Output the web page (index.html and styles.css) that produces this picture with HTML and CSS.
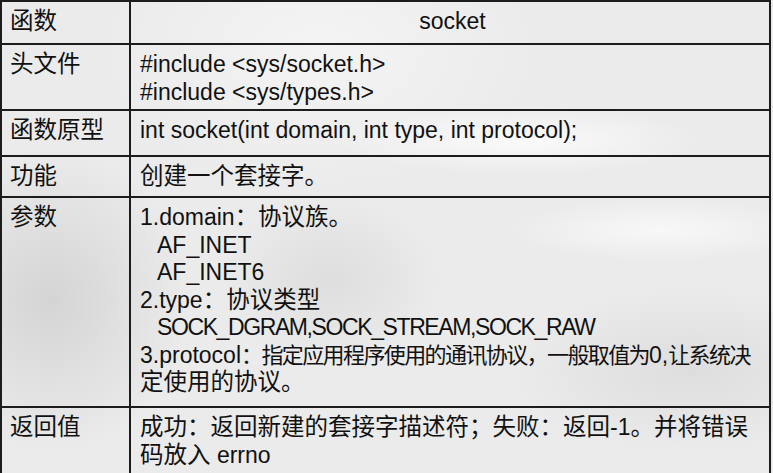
FILE: index.html
```html
<!DOCTYPE html>
<html lang="zh-CN">

<head>
  <meta charset="UTF-8" />
  <meta name="viewport" content="width=device-width, initial-scale=1.0" />
  <title>socket</title>
  <link rel="stylesheet" href="styles.css">
</head>

<body>
  <table class="api-table">
    <tr class="row-name">
      <td class="key"><span class="zh">函数</span></td>
      <td class="val center">socket</td>
    </tr>
    <tr class="row-header">
      <td class="key"><span class="zh">头文件</span></td>
      <td class="val">
        <div>#include &lt;sys/socket.h&gt;</div>
        <div>#include &lt;sys/types.h&gt;</div>
      </td>
    </tr>
    <tr class="row-proto">
      <td class="key"><span class="zh">函数原型</span></td>
      <td class="val">int socket(int domain, int type, int protocol);</td>
    </tr>
    <tr class="row-desc">
      <td class="key"><span class="zh">功能</span></td>
      <td class="val"><span class="zh">创建一个套接字。</span></td>
    </tr>
    <tr class="row-params">
      <td class="key"><span class="zh">参数</span></td>
      <td class="val">
        <div>1.domain<span class="zh">：协议族。</span></div>
        <div class="indent">AF_INET</div>
        <div class="indent">AF_INET6</div>
        <div>2.type<span class="zh">：协议类型</span></div>
        <div class="indent narrow">SOCK_DGRAM,SOCK_STREAM,SOCK_RAW</div>
        <div class="tight">3.protocol<span class="zh">：指定应用程序使用的通讯协议，一般取值为</span>0,<span class="zh">让系统决</span></div>
        <div><span class="zh">定使用的协议。</span></div>
      </td>
    </tr>
    <tr class="row-return">
      <td class="key"><span class="zh">返回值</span></td>
      <td class="val">
        <div><span class="zh">成功：返回新建的套接字描述符；失败：返回</span>-1<span class="zh">。并将错误</span></div>
        <div><span class="zh">码放入</span> errno</div>
      </td>
    </tr>
  </table>
</body>

</html>
```

FILE: styles.css
```css
body {
  margin: 0;
  padding: 0;
  font-family: 'Liberation Sans', Arial, 'Noto Sans CJK SC', sans-serif;
  font-size: 23px;
  line-height: 27.5px;
  color: #111;
  background-color: #ebebeb;
  background-image:
    radial-gradient(ellipse 260px 50px at 520px 140px, rgba(255, 255, 255, 0.8), rgba(255, 255, 255, 0) 70%),
    radial-gradient(ellipse 220px 45px at 660px 230px, rgba(255, 255, 255, 0.65), rgba(255, 255, 255, 0) 70%),
    radial-gradient(ellipse 320px 200px at 320px 50px, rgba(255, 255, 255, 0.45), rgba(255, 255, 255, 0) 70%),
    radial-gradient(ellipse 200px 220px at 50px 300px, rgba(170, 170, 170, 0.35), rgba(170, 170, 170, 0) 70%),
    radial-gradient(ellipse 160px 120px at 330px 280px, rgba(190, 190, 190, 0.3), rgba(190, 190, 190, 0) 70%),
    radial-gradient(ellipse 260px 120px at 690px 370px, rgba(190, 190, 190, 0.3), rgba(190, 190, 190, 0) 70%);
  height: 473px;
  overflow: hidden;
}

.api-table {
  border-collapse: separate;
  border-spacing: 0;
  width: 771px;
  border-top: 2px solid #1c1c1c;
  border-left: 2px solid #1c1c1c;
  table-layout: fixed;
}

.api-table td {
  border-right: 2px solid #1c1c1c;
  border-bottom: 2px solid #1c1c1c;
  vertical-align: top;
  padding: 6px 4px 0 8px;
  white-space: nowrap;
}

.api-table td.key {
  width: 115px;
}

.api-table td.val {
  padding-left: 9px;
}

.center {
  text-align: center;
}

.zh {
  font-size: 23.5px;
}

.indent {
  padding-left: 17px;
}

.narrow {
  letter-spacing: -1.4px;
}

.tight .zh {
  font-size: 22px;
  letter-spacing: -1.6px;
}

.row-name {
  height: 43px;
}

.row-header {
  height: 66px;
}

.row-proto {
  height: 46px;
}

.row-desc {
  height: 41px;
}

.row-params {
  height: 210px;
}

.row-return {
  height: 80px;
}
```
